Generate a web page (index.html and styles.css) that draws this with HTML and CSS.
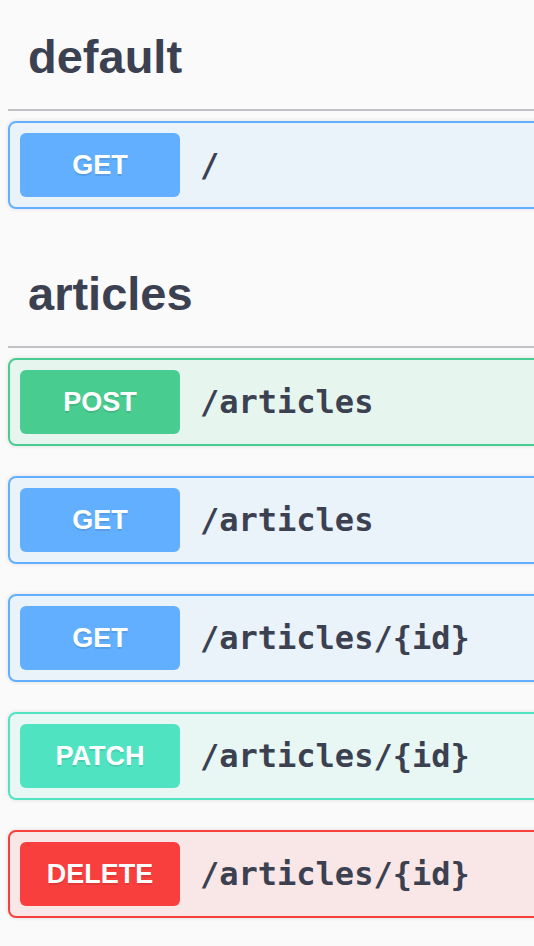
FILE: index.html
```html
<!DOCTYPE html>
<html lang="en">
<head>
<meta charset="utf-8">
<title>Swagger operations</title>
<link rel="stylesheet" href="styles.css">
</head>
<body>
<div class="viewport">
  <main class="wrapper">
    <section class="tag-section">
      <h3 class="tag-title">default</h3>
      <div class="opblock opblock-get">
        <span class="method">GET</span>
        <span class="path">/</span>
      </div>
    </section>
    <section class="tag-section">
      <h3 class="tag-title">articles</h3>
      <div class="opblock opblock-post">
        <span class="method">POST</span>
        <span class="path">/articles</span>
      </div>
      <div class="opblock opblock-get">
        <span class="method">GET</span>
        <span class="path">/articles</span>
      </div>
      <div class="opblock opblock-get">
        <span class="method">GET</span>
        <span class="path">/articles/{id}</span>
      </div>
      <div class="opblock opblock-patch">
        <span class="method">PATCH</span>
        <span class="path">/articles/{id}</span>
      </div>
      <div class="opblock opblock-delete">
        <span class="method">DELETE</span>
        <span class="path">/articles/{id}</span>
      </div>
    </section>
  </main>
</div>
</body>
</html>
```
FILE: styles.css
```css
html, body {
  margin: 0;
  padding: 0;
  background: #fafafa;
  overflow: hidden;
}

.viewport {
  width: 100%;
  overflow: hidden;
}

.wrapper {
  width: 1200px;
  margin-left: 8px;
  padding-top: 2px;
}

.tag-section {
  display: flex;
  flex-direction: column;
}

.tag-title {
  margin: 0 0 10px 0;
  padding: 21px 40px 19px 20px;
  font-family: "Liberation Sans", Arial, sans-serif;
  font-size: 47px;
  font-weight: 700;
  line-height: 67px;
  color: #3b4151;
  border-bottom: 2px solid rgba(59, 65, 81, 0.3);
}

.opblock {
  display: flex;
  align-items: center;
  box-sizing: border-box;
  height: 88px;
  padding: 10px;
  margin-bottom: 30px;
  border: 2px solid;
  border-radius: 8px;
  box-shadow: 0 0 4px rgba(0, 0, 0, 0.12);
}

.method {
  flex: none;
  width: 160px;
  height: 64px;
  display: flex;
  align-items: center;
  justify-content: center;
  border-radius: 6px;
  font-family: "Liberation Sans", Arial, sans-serif;
  font-size: 27px;
  font-weight: 700;
  color: #fff;
  text-shadow: 0 2px 0 rgba(0, 0, 0, 0.1);
}

.path {
  padding: 0 20px;
  font-family: "DejaVu Sans Mono", monospace;
  font-size: 32px;
  font-weight: 700;
  color: #3b4151;
}

.opblock-get {
  background: rgba(97, 175, 254, 0.1);
  border-color: #61affe;
}
.opblock-get .method { background: #61affe; }

.opblock-post {
  background: rgba(73, 204, 144, 0.1);
  border-color: #49cc90;
}
.opblock-post .method { background: #49cc90; }

.opblock-patch {
  background: rgba(80, 227, 194, 0.1);
  border-color: #50e3c2;
}
.opblock-patch .method { background: #50e3c2; }

.opblock-delete {
  background: rgba(249, 62, 62, 0.1);
  border-color: #f93e3e;
}
.opblock-delete .method { background: #f93e3e; }
```
